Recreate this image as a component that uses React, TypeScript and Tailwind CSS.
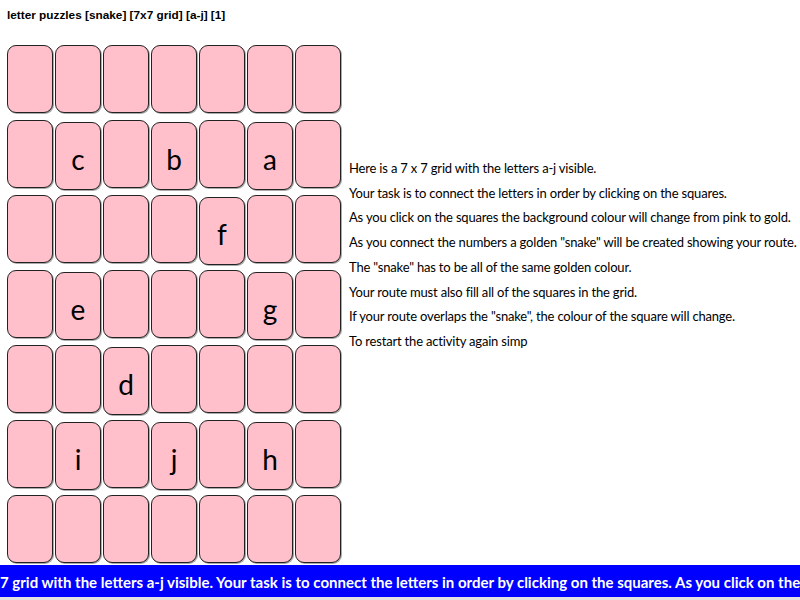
const letters: Record<number, string> = {
  8: 'c',
  10: 'b',
  12: 'a',
  18: 'f',
  22: 'e',
  26: 'g',
  30: 'd',
  36: 'i',
  38: 'j',
  40: 'h',
};

const instructions = [
  'Here is a 7 x 7 grid with the letters a-j visible.',
  'Your task is to connect the letters in order by clicking on the squares.',
  'As you click on the squares the background colour will change from pink to gold.',
  'As you connect the numbers a golden "snake" will be created showing your route.',
  'The "snake" has to be all of the same golden colour.',
  'Your route must also fill all of the squares in the grid.',
  'If your route overlaps the "snake", the colour of the square will change.',
  'To restart the activity again simp',
];

const comic = "font-['Lato',sans-serif]";

export default function App() {
  return (
    <div className="w-[800px] h-[600px] overflow-hidden bg-white">
      {/* title */}
      <div className="h-[45px] pl-[7px] pt-[7px]">
        <h1 className="font-['Liberation_Sans',Arial,sans-serif] font-bold text-[11.8px] leading-[16px] text-black">
          letter puzzles [snake] [7x7 grid] [a-j] [1]
        </h1>
      </div>

      <div className="flex">
        {/* puzzle grid */}
        <div className="ml-[7px] grid grid-cols-[repeat(7,46px)] grid-rows-[repeat(7,68px)] gap-x-[2px] gap-y-[7px]">
          {Array.from({ length: 49 }, (_, i) => {
            const l = letters[i];
            return (
              <div
                key={i}
                className={`rounded-[9px] border-[1.5px] border-[#222] bg-[#ffc0cb] shadow-[1px_1px_0_#aaa] flex items-center justify-center ${comic} text-[28px] text-black pt-[6px] ${
                  l ? 'mt-[2px] -mb-[2px]' : ''
                }`}
              >
                {l}
              </div>
            );
          })}
        </div>

        {/* instructions */}
        <div className={`ml-[8px] pt-[111px] ${comic} text-[13px] tracking-[-0.18px] leading-[24.7px] text-black whitespace-nowrap`}>
          {instructions.map((t) => (
            <p key={t}>{t}</p>
          ))}
        </div>
      </div>

      {/* scrolling marquee */}
      <div className="mt-[2px] h-[32px] bg-[#0000ff] overflow-hidden flex items-center">
        <p className={`${comic} font-bold text-[15px] text-white whitespace-nowrap pt-[3px]`}>
          7 grid with the letters a-j visible. Your task is to connect the letters in order by clicking on the squares. As you click on the squares the background colour will change from pink to gold.
        </p>
      </div>
      <div className="h-[3px] bg-[#e3e3e3]" />
    </div>
  );
}
